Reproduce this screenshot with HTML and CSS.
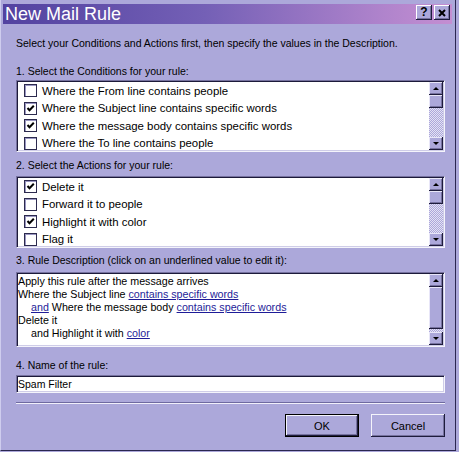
FILE: index.html
```html
<!DOCTYPE html>
<html>
<head>
<meta charset="utf-8">
<title>New Mail Rule</title>
<link rel="stylesheet" href="styles.css">
</head>
<body>
<div class="window">
  <div class="titlebar">
    <span class="title">New Mail Rule</span>
    <div class="tbtns">
      <span class="tbtn help">?</span>
      <span class="tbtn close"><svg width="8" height="8" viewBox="0 0 8 8"><path d="M1 1 L7 7 M7 1 L1 7" stroke="#000" stroke-width="2" fill="none"/></svg></span>
    </div>
  </div>
  <div class="content">
    <p class="intro">Select your Conditions and Actions first, then specify the values in the Description.</p>

    <p class="label l1">1. Select the Conditions for your rule:</p>
    <div class="sunken listbox lb1">
      <ul class="items">
        <li><span class="cb"></span>Where the From line contains people</li>
        <li><span class="cb on"><svg viewBox="0 0 11 11"><path d="M2.5 5 L4.5 7.2 L8.8 2.8" stroke="#000" stroke-width="2" fill="none"/></svg></span>Where the Subject line contains specific words</li>
        <li><span class="cb on"><svg viewBox="0 0 11 11"><path d="M2.5 5 L4.5 7.2 L8.8 2.8" stroke="#000" stroke-width="2" fill="none"/></svg></span>Where the message body contains specific words</li>
        <li><span class="cb"></span>Where the To line contains people</li>
      </ul>
      <div class="scroll">
        <span class="sbtn"><i class="arrow up"></i></span>
        <span class="thumb"></span>
        <span class="track"></span>
        <span class="sbtn"><i class="arrow down"></i></span>
      </div>
    </div>

    <p class="label l2">2. Select the Actions for your rule:</p>
    <div class="sunken listbox lb2">
      <ul class="items">
        <li><span class="cb on"><svg viewBox="0 0 11 11"><path d="M2.5 5 L4.5 7.2 L8.8 2.8" stroke="#000" stroke-width="2" fill="none"/></svg></span>Delete it</li>
        <li><span class="cb"></span>Forward it to people</li>
        <li><span class="cb on"><svg viewBox="0 0 11 11"><path d="M2.5 5 L4.5 7.2 L8.8 2.8" stroke="#000" stroke-width="2" fill="none"/></svg></span>Highlight it with color</li>
        <li><span class="cb"></span>Flag it</li>
      </ul>
      <div class="scroll">
        <span class="sbtn"><i class="arrow up"></i></span>
        <span class="thumb"></span>
        <span class="track"></span>
        <span class="sbtn"><i class="arrow down"></i></span>
      </div>
    </div>

    <p class="label l3">3. Rule Description (click on an underlined value to edit it):</p>
    <div class="sunken listbox desc">
      <div class="desctext">
        <div>Apply this rule after the message arrives</div>
        <div>Where the Subject line <a class="lnk">contains specific words</a></div>
        <div class="indent"><a class="lnk">and</a> Where the message body <a class="lnk">contains specific words</a></div>
        <div>Delete it</div>
        <div class="indent">and Highlight it with <a class="lnk">color</a></div>
      </div>
      <div class="scroll">
        <span class="sbtn"><i class="arrow up"></i></span>
        <span class="thumb big"></span>
        <span class="track"></span>
        <span class="sbtn"><i class="arrow down"></i></span>
      </div>
    </div>

    <p class="label l4">4. Name of the rule:</p>
    <div class="sunken name">Spam Filter</div>

    <div class="sep"></div>

    <div class="buttons">
      <span class="btn default">OK</span>
      <span class="btn">Cancel</span>
    </div>
  </div>
</div>
</body>
</html>
```

FILE: styles.css
```css
html, body {
  margin: 0;
  padding: 0;
  background: #aca8da;
}

.window {
  width: 456px;
  height: 451px;
  box-sizing: border-box;
  background: #aca8da;
  border-left: 1px solid #cfcdee;
  border-right: 1px solid #2a2650;
  border-bottom: 1px solid #2a2650;
  padding: 4px 3px 0 2px;
  display: flex;
  flex-direction: column;
  font-family: "Liberation Sans", Arial, sans-serif;
  font-size: 11px;
  color: #000;
}

.titlebar {
  height: 20px;
  flex: none;
  background: linear-gradient(90deg, #5242a0 0%, #7460b6 45%, #b084cc 85%, #c48ed2 100%);
  display: flex;
  justify-content: space-between;
  align-items: flex-start;
  padding: 0 2px 0 2px;
}

.title {
  color: #fff;
  font-size: 18px;
  line-height: 20px;
}

.tbtns {
  display: flex;
  gap: 2px;
  margin-top: 1px;
}

.tbtn {
  width: 16px;
  height: 15px;
  box-sizing: border-box;
  background: #aca8da;
  box-shadow: inset -1px -1px 0 #1e1c3c, inset 1px 1px 0 #ffffff, inset -2px -2px 0 #76729f;
  display: flex;
  align-items: center;
  justify-content: center;
}

.help {
  font-weight: bold;
  font-size: 12px;
  line-height: 15px;
}

.content {
  padding: 0 7px 0 13px;
  display: flex;
  flex-direction: column;
}

.intro, .label {
  margin: 0;
  line-height: 13px;
  white-space: nowrap;
  font-size: 10.5px;
}

.intro { margin-top: 13px; }
.l1 { margin-top: 15px; }
.l2 { margin-top: 7px; }
.l3 { margin-top: 6px; }
.l4 { margin-top: 12px; }

.sunken {
  box-sizing: border-box;
  background: #fff;
  border: 1px solid;
  border-color: #76729f #f4f4fb #f4f4fb #76729f;
  box-shadow: inset 1px 1px 0 #1c1a3a, inset -1px -1px 0 #cfcde8;
  padding: 1px;
}

.listbox {
  display: flex;
  overflow: hidden;
}

.lb1 { margin-top: 2px; height: 72px; }
.lb2 { margin-top: 4px; height: 72px; }
.desc { margin-top: 5px; height: 75px; }

.items {
  list-style: none;
  margin: 0;
  padding: 0 0 0 6px;
  flex: 1;
  overflow: hidden;
  font-size: 11.4px;
}

.items li {
  height: 17.5px;
  display: flex;
  align-items: center;
  gap: 5px;
  white-space: nowrap;
}

.cb {
  width: 13px;
  height: 13px;
  box-sizing: border-box;
  background: #fff;
  border: 1px solid #2c2a4e;
  box-shadow: inset 1px 1px 0 #9a97c2;
  flex: none;
  display: flex;
}

.cb svg {
  width: 11px;
  height: 11px;
}

.scroll {
  width: 14px;
  flex: none;
  display: flex;
  flex-direction: column;
}

.sbtn, .thumb {
  height: 13px;
  flex: none;
  background: #aca8da;
  box-shadow: inset -1px -1px 0 #1e1c3c, inset 1px 1px 0 #e8e6f8, inset -2px -2px 0 #76729f;
  display: flex;
  align-items: center;
  justify-content: center;
}

.thumb.big { height: 42px; }

.track {
  flex: 1;
  background-color: #aca8da;
  background-image: repeating-conic-gradient(#e4e2f4 0 25%, #aca8da 0 50%);
  background-size: 2px 2px;
}

.arrow {
  width: 0;
  height: 0;
  border-left: 3px solid transparent;
  border-right: 3px solid transparent;
}

.arrow.up { border-bottom: 3px solid #000; margin-top: -1px; }
.arrow.down { border-top: 3px solid #000; }

.desctext {
  flex: 1;
  padding-top: 1px;
  line-height: 13px;
  white-space: nowrap;
  overflow: hidden;
  font-size: 10.7px;
}

.indent { padding-left: 13px; }

.lnk {
  color: #1e1c98;
  text-decoration: underline;
}

.name {
  margin-top: 3px;
  height: 18px;
  line-height: 14px;
  padding: 1px;
  font-size: 10.5px;
}

.sep {
  margin-top: 9px;
  height: 0;
  border-top: 1px solid #6e6aa0;
  border-bottom: 1px solid #f0effa;
}

.buttons {
  margin-top: 10px;
  display: flex;
  justify-content: flex-end;
  gap: 12px;
}

.btn {
  width: 74px;
  height: 23px;
  box-sizing: border-box;
  background: #aca8da;
  box-shadow: inset -1px -1px 0 #1e1c3c, inset 1px 1px 0 #f4f4fb, inset -2px -2px 0 #76729f;
  display: flex;
  align-items: center;
  justify-content: center;
  font-size: 11px;
}

.btn.default {
  border: 1px solid #000;
}
```
